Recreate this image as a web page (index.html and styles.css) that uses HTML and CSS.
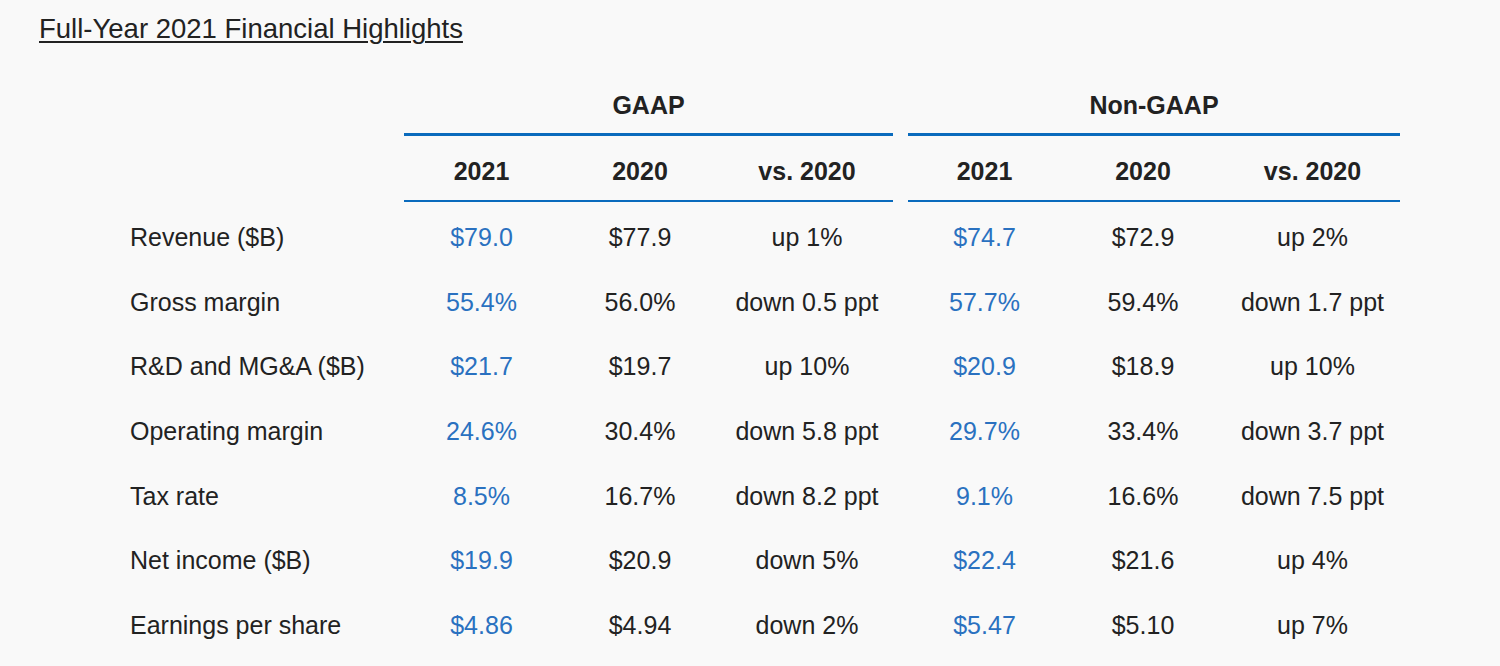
FILE: index.html
```html
<!DOCTYPE html>
<html lang="en">
<head>
<meta charset="utf-8">
<title>Full-Year 2021 Financial Highlights</title>
<link rel="stylesheet" href="styles.css">
</head>
<body>
<div class="page">
  <h1 class="title">Full-Year 2021 Financial Highlights</h1>
  <div class="table">
    <div class="cell blank"></div>
    <div class="group g1">GAAP</div>
    <div class="spacer"></div>
    <div class="group g2">Non-GAAP</div>

    <div class="cell blank sub-blank"></div>
    <div class="sub">2021</div><div class="sub">2020</div><div class="sub">vs. 2020</div>
    <div class="spacer"></div>
    <div class="sub">2021</div><div class="sub">2020</div><div class="sub">vs. 2020</div>

    <div class="label">Revenue ($B)</div>
    <div class="val hi">$79.0</div><div class="val">$77.9</div><div class="val">up 1%</div>
    <div class="spacer"></div>
    <div class="val hi">$74.7</div><div class="val">$72.9</div><div class="val">up 2%</div>

    <div class="label">Gross margin</div>
    <div class="val hi">55.4%</div><div class="val">56.0%</div><div class="val">down 0.5 ppt</div>
    <div class="spacer"></div>
    <div class="val hi">57.7%</div><div class="val">59.4%</div><div class="val">down 1.7 ppt</div>

    <div class="label">R&amp;D and MG&amp;A ($B)</div>
    <div class="val hi">$21.7</div><div class="val">$19.7</div><div class="val">up 10%</div>
    <div class="spacer"></div>
    <div class="val hi">$20.9</div><div class="val">$18.9</div><div class="val">up 10%</div>

    <div class="label">Operating margin</div>
    <div class="val hi">24.6%</div><div class="val">30.4%</div><div class="val">down 5.8 ppt</div>
    <div class="spacer"></div>
    <div class="val hi">29.7%</div><div class="val">33.4%</div><div class="val">down 3.7 ppt</div>

    <div class="label">Tax rate</div>
    <div class="val hi">8.5%</div><div class="val">16.7%</div><div class="val">down 8.2 ppt</div>
    <div class="spacer"></div>
    <div class="val hi">9.1%</div><div class="val">16.6%</div><div class="val">down 7.5 ppt</div>

    <div class="label">Net income ($B)</div>
    <div class="val hi">$19.9</div><div class="val">$20.9</div><div class="val">down 5%</div>
    <div class="spacer"></div>
    <div class="val hi">$22.4</div><div class="val">$21.6</div><div class="val">up 4%</div>

    <div class="label">Earnings per share</div>
    <div class="val hi">$4.86</div><div class="val">$4.94</div><div class="val">down 2%</div>
    <div class="spacer"></div>
    <div class="val hi">$5.47</div><div class="val">$5.10</div><div class="val">up 7%</div>
  </div>
</div>
</body>
</html>
```

FILE: styles.css
```css
html, body {
  margin: 0;
  padding: 0;
  background: #f9f9f9;
}
body {
  font-family: "Liberation Sans", Arial, sans-serif;
  color: #222;
}
.page {
  padding: 13px 0 0 39px;
}
.title {
  margin: 0;
  font-size: 27.5px;
  font-weight: normal;
  text-decoration: underline;
  text-decoration-thickness: 2px;
  text-underline-offset: 3px;
  line-height: 31px;
  color: #222;
}
.table {
  display: grid;
  grid-template-columns: 274px 155px 162px 172px 15px 153px 164px 175px;
  margin: 47px 0 0 91px;
  font-size: 25px;
}
.group {
  grid-column: span 3;
  text-align: center;
  font-weight: bold;
  height: 42px;
  line-height: 28px;
  border-bottom: 3px solid #0a6bbd;
}
.sub {
  text-align: center;
  font-weight: bold;
  height: 64px;
  line-height: 70px;
  border-bottom: 2px solid #0a6bbd;
}
.label, .val {
  height: 64.7px;
  line-height: 70px;
}
.val {
  text-align: center;
}
.hi {
  color: #2a71c0;
}
```
